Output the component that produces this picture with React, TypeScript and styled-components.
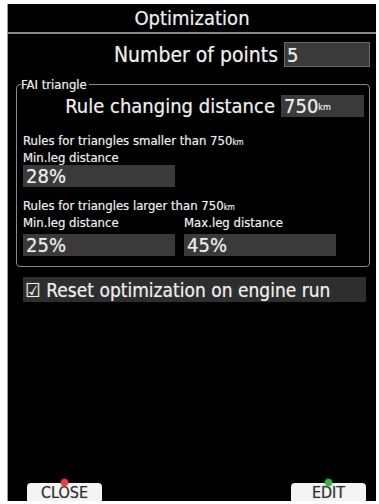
import React from 'react'
import styled, { createGlobalStyle } from 'styled-components'

const Global = createGlobalStyle`
  html, body {
    margin: 0;
    padding: 0;
    background: #ffffff;
  }
  body {
    font-family: "DejaVu Sans Condensed", "DejaVu Sans", "Liberation Sans", sans-serif;
  }
`

const Screen = styled.div`
  margin: 4px 0 0 7px;
  width: 369px;
  height: 497px;
  background: #000;
  border-left: 1px solid #9a9a9a;
  display: flex;
  flex-direction: column;
  color: #ececec;
  text-shadow: 0 0 1px rgba(255, 255, 255, 0.5);
  box-sizing: border-box;
`

const TitleBar = styled.div`
  height: 28px;
  border-bottom: 2px solid #8a8a8a;
  display: flex;
  align-items: center;
  justify-content: center;
  font-size: 20px;
`

const Content = styled.div`
  padding: 8px 6px 0 8px;
  display: flex;
  flex-direction: column;
`

const FieldRow = styled.div<{ $size: number }>`
  display: flex;
  justify-content: flex-end;
  align-items: center;
  gap: 6px;
  font-size: ${p => p.$size}px;
`

const Field = styled.div<{ $w: number; $h: number; $size: number; $framed?: boolean }>`
  width: ${p => p.$w}px;
  height: ${p => p.$h}px;
  background: #3a3a3a;
  border: 1px solid ${p => (p.$framed ? '#6a6a6a' : '#3a3a3a')};
  box-sizing: border-box;
  font-size: ${p => p.$size}px;
  display: flex;
  align-items: center;
  padding-left: 2px;
  line-height: 1;
`

const Unit = styled.span`
  font-size: 9px;
  align-self: flex-end;
  margin-bottom: 4px;
`

const Group = styled.fieldset`
  margin: 10px 0 0 0;
  padding: 2px 5px 10px 6px;
  border: 1px solid #8a8a8a;
  border-radius: 4px;
`

const Legend = styled.legend`
  font-size: 13px;
  padding: 0 2px 0 0;
  margin-left: -2px;
`

const Small = styled.div<{ $top?: number; $bottom?: number }>`
  font-size: 13px;
  margin-top: ${p => p.$top ?? 0}px;
  margin-bottom: ${p => p.$bottom ?? 0}px;
  line-height: 15px;
`

const SmallUnit = styled.span`
  font-size: 8px;
`

const Cols = styled.div`
  display: grid;
  grid-template-columns: 161px 152px;
`

const CheckRow = styled.div`
  margin: 10px 0 0 7px;
  width: 343px;
  height: 25px;
  background: #2e2e2e;
  display: flex;
  align-items: center;
  gap: 6px;
  font-size: 19px;
  padding-left: 2px;
  box-sizing: border-box;
`

const Spacer = styled.div`
  flex: 1;
`

const ButtonBar = styled.div`
  display: flex;
  justify-content: space-between;
  padding: 0 10px 0 19px;
`

const Tab = styled.div<{ $dot: string }>`
  position: relative;
  width: 75px;
  height: 18px;
  background: #f4f4f4;
  border-radius: 4px 4px 0 0;
  color: #333;
  text-shadow: 0 0 1px rgba(0, 0, 0, 0.4);
  font-size: 16px;
  display: flex;
  align-items: flex-end;
  justify-content: center;
  line-height: 1;

  &::before {
    content: '';
    position: absolute;
    top: -4px;
    left: 50%;
    margin-left: -4px;
    width: 7px;
    height: 7px;
    border-radius: 50%;
    background: ${p => p.$dot};
    box-shadow: 0 0 3px ${p => p.$dot};
  }
`

export default function App() {
  return (
    <>
      <Global />
      <Screen>
        <TitleBar>Optimization</TitleBar>
        <Content>
          <FieldRow $size={21}>
            <span>Number of points</span>
            <Field $w={86} $h={25} $size={20} $framed>5</Field>
          </FieldRow>
          <Group>
            <Legend>FAI triangle</Legend>
            <FieldRow $size={20}>
              <span>Rule changing distance</span>
              <Field $w={83} $h={22} $size={20}>750<Unit>km</Unit></Field>
            </FieldRow>
            <Small $top={15}>Rules for triangles smaller than 750<SmallUnit>km</SmallUnit></Small>
            <Small>Min.leg distance</Small>
            <Field $w={152} $h={22} $size={20}>28%</Field>
            <Small $top={11}>Rules for triangles larger than 750<SmallUnit>km</SmallUnit></Small>
            <Cols>
              <div>
                <Small $bottom={4}>Min.leg distance</Small>
                <Field $w={152} $h={22} $size={20}>25%</Field>
              </div>
              <div>
                <Small $bottom={4}>Max.leg distance</Small>
                <Field $w={152} $h={22} $size={20}>45%</Field>
              </div>
            </Cols>
          </Group>
          <CheckRow>
            <span>☑</span>
            <span>Reset optimization on engine run</span>
          </CheckRow>
        </Content>
        <Spacer />
        <ButtonBar>
          <Tab $dot="#e0404a">CLOSE</Tab>
          <Tab $dot="#3fb04a">EDIT</Tab>
        </ButtonBar>
      </Screen>
    </>
  )
}
